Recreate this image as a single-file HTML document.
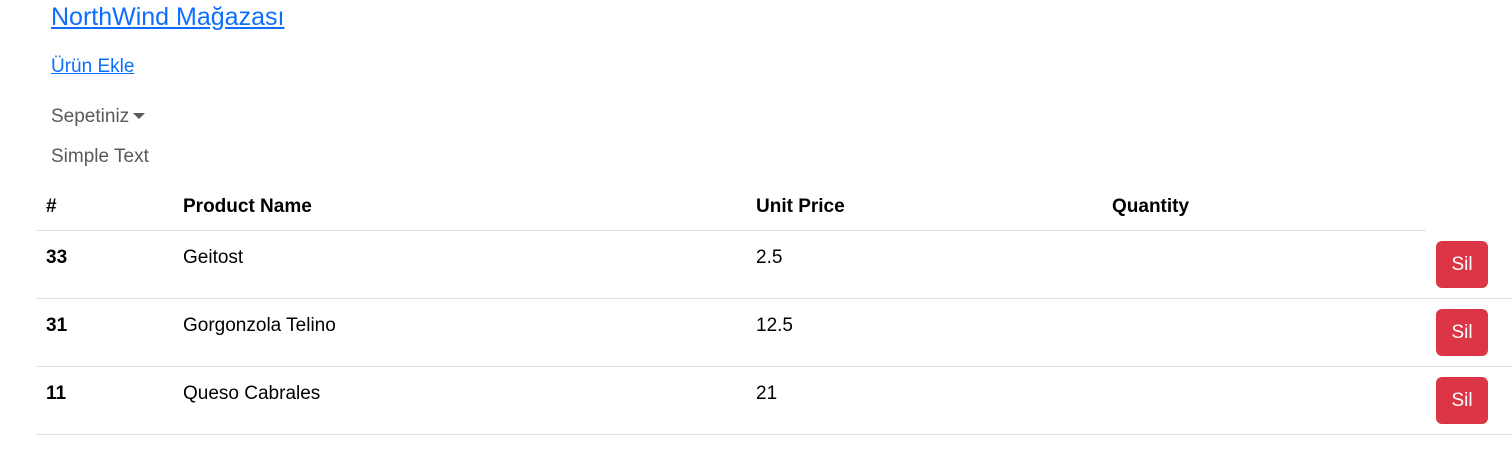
<!DOCTYPE html>
<html><head><meta charset="utf-8"><style>
*{margin:0;padding:0;box-sizing:border-box}
body{width:1512px;height:467px;background:#fff;font-family:"Liberation Sans",sans-serif;color:#000;position:relative;overflow:hidden}
.a{position:absolute;white-space:nowrap;line-height:1}
a{color:#0d6efd;text-decoration:underline}
.g{color:#595959;font-size:19px}
.h{font-weight:bold;font-size:19px}
.t{font-size:19px}
.line{position:absolute;height:1px;background:#dee2e6;left:36px}
.btn{position:absolute;left:1436px;width:52px;height:47px;background:#dc3545;color:#fff;border-radius:6px;font-size:19px;display:flex;align-items:center;justify-content:center}
</style></head><body>
<div class="a" style="left:51px;top:5px;font-size:25px"><a>NorthWind Mağazası</a></div>
<div class="a" style="left:51px;top:57px;font-size:19px"><a>Ürün Ekle</a></div>
<div class="a g" style="left:51px;top:107px">Sepetiniz<span style="display:inline-block;width:0;height:0;border-left:6px solid transparent;border-right:6px solid transparent;border-top:6px solid #595959;margin-left:4px;vertical-align:3px"></span></div>
<div class="a g" style="left:51px;top:147px">Simple Text</div>

<div class="a h" style="left:46px;top:197px">#</div>
<div class="a h" style="left:183px;top:197px">Product Name</div>
<div class="a h" style="left:756px;top:197px">Unit Price</div>
<div class="a h" style="left:1112px;top:197px">Quantity</div>
<div class="line" style="top:230px;width:1390px"></div>

<div class="a h" style="left:46px;top:248px">33</div>
<div class="a t" style="left:183px;top:248px">Geitost</div>
<div class="a t" style="left:756px;top:248px">2.5</div>
<div class="btn" style="top:241px">Sil</div>
<div class="line" style="top:298px;width:1476px"></div>

<div class="a h" style="left:46px;top:316px">31</div>
<div class="a t" style="left:183px;top:316px">Gorgonzola Telino</div>
<div class="a t" style="left:756px;top:316px">12.5</div>
<div class="btn" style="top:309px">Sil</div>
<div class="line" style="top:366px;width:1476px"></div>

<div class="a h" style="left:46px;top:384px">11</div>
<div class="a t" style="left:183px;top:384px">Queso Cabrales</div>
<div class="a t" style="left:756px;top:384px">21</div>
<div class="btn" style="top:377px">Sil</div>
<div class="line" style="top:434px;width:1476px"></div>
</body></html>
